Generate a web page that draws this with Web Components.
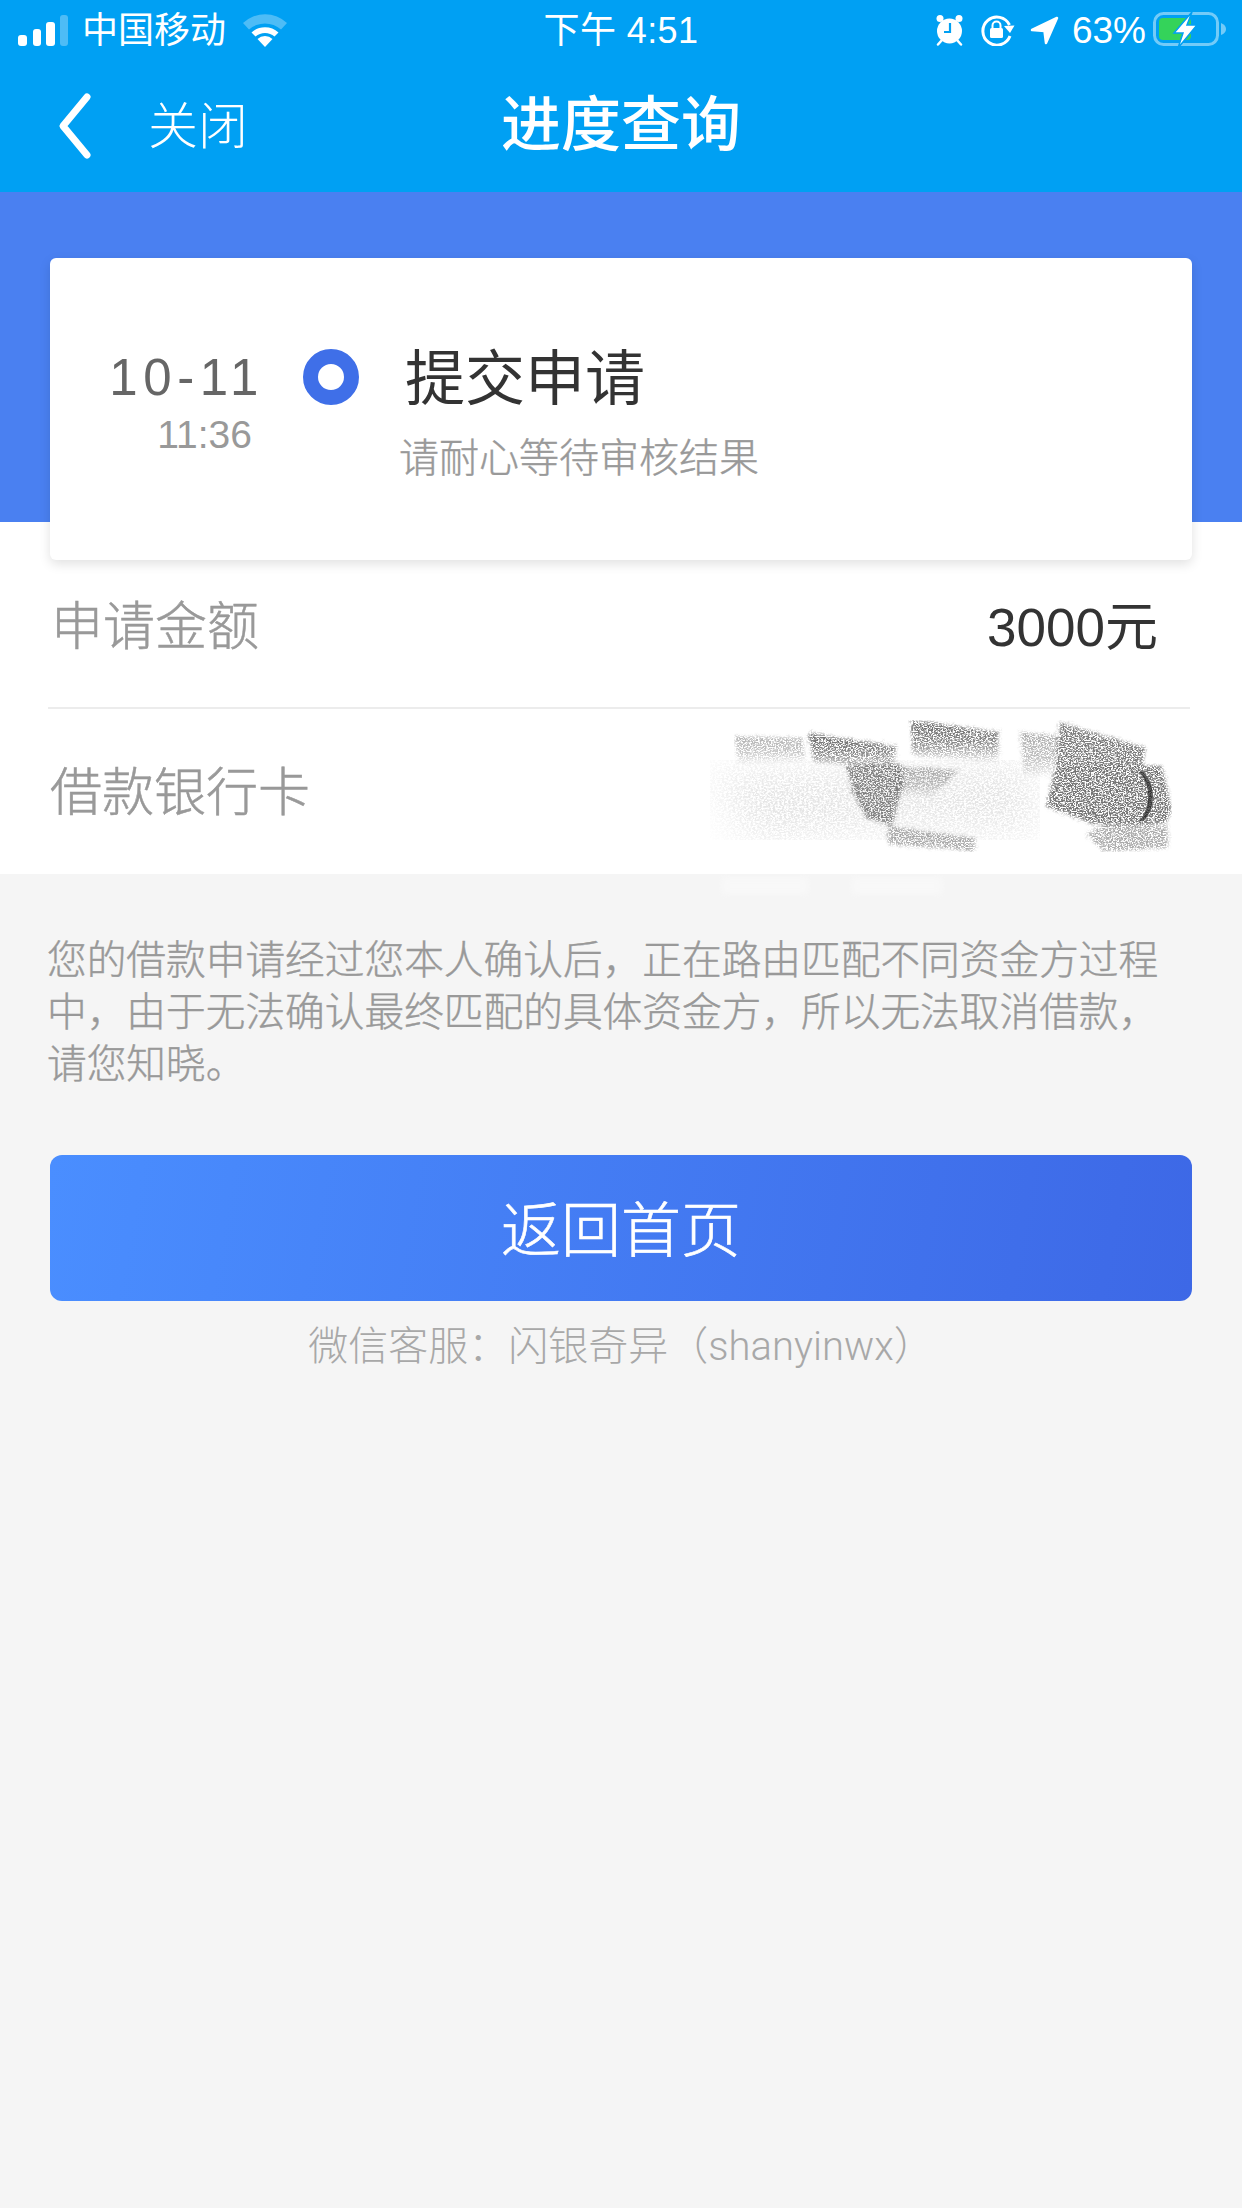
<!DOCTYPE html>
<html lang="zh-CN">
<head>
<meta charset="utf-8">
<title>进度查询</title>
<style>
  html, body { margin: 0; padding: 0; background: #f5f5f5; }
  body {
    width: 1242px;
    height: 2208px;
    overflow: hidden;
    font-family: "Liberation Sans", "Noto Sans CJK SC", sans-serif;
  }
  .thin { font-family: Roboto, "Liberation Sans", sans-serif; font-weight: 300; }
</style>
</head>
<body>
<app-header title="进度查询" back="关闭"></app-header>
<progress-band>
  <progress-card date="10-11" time="11:36" heading="提交申请" note="请耐心等待审核结果"></progress-card>
</progress-band>
<info-list>
  <info-row label="申请金额" value="3000元"></info-row>
  <info-row label="借款银行卡" value=")" masked></info-row>
</info-list>
<notice-text>您的借款申请经过您本人确认后，正在路由匹配不同资金方过程中，由于无法确认最终匹配的具体资金方，所以无法取消借款，请您知晓。</notice-text>
<primary-button>返回首页</primary-button>
<service-line>微信客服：闪银奇异（<span class="thin">shanyinwx</span>）</service-line>

<script>
class AppHeader extends HTMLElement {
  connectedCallback() {
    this.attachShadow({ mode: 'open' });
    this.shadowRoot.innerHTML = `
      <style>
        :host { display: block; height: 192px; background: #00a0f3; color: #fff; }
        .status {
          height: 60px;
          display: grid;
          grid-template-columns: 1fr auto 1fr;
          align-items: center;
          font-size: 36px;
        }
        .left { display: flex; align-items: center; padding-left: 18px; }
        .carrier { margin-left: 13px; margin-right: 16px; line-height: 40px; padding-top: 2px; }
        .clock { font-size: 36px; line-height: 40px; letter-spacing: .4px; padding-top: 2px; }
        .right { display: flex; align-items: center; justify-content: flex-end; padding-right: 15px; }
        .pct { font-size: 37px; line-height: 40px; margin: 0 7px 0 13px; padding-top: 1px; }
        svg { display: block; }
        .bar {
          height: 132px;
          display: grid;
          grid-template-columns: 1fr auto 1fr;
          align-items: center;
        }
        .back { display: flex; align-items: center; padding-left: 57px; }
        .back span { font-size: 50px; font-weight: 300; margin-left: 55px; line-height: 60px; position: relative; top: 1px; }
        h1 { margin: 0; font-size: 60px; font-weight: 500; line-height: 70px; }
      </style>
      <div class="status">
        <div class="left">
          <svg width="51" height="32" viewBox="0 0 51 32" fill="#fff">
            <rect x="0" y="21" width="9" height="11" rx="3"/>
            <rect x="15" y="15" width="8" height="17" rx="3"/>
            <rect x="28" y="8" width="9" height="24" rx="3"/>
            <rect x="42" y="1" width="8" height="31" rx="3" opacity=".3"/>
          </svg>
          <span class="carrier">中国移动</span>
          <svg width="46" height="36" viewBox="0 0 46 36">
            <path d="M23 35 L15.500 27 A11 11 0 0 1 30.500 27 Z" fill="#fff"/>
            <path d="M9.500 20.500 A20 20 0 0 1 36.500 20.500 L32.500 24.500 A14.500 14.500 0 0 0 13.500 24.500 Z" fill="#fff"/>
            <path d="M1 11 A32 32 0 0 1 45 11 L39 17.500 A24 24 0 0 0 7 17.500 Z" fill="#fff" opacity=".3"/>
          </svg>
        </div>
        <div class="clock">下午 4:51</div>
        <div class="right">
          <svg width="29" height="32" viewBox="0 0 29 32" fill="#fff">
            <circle cx="5" cy="4.500" r="3.500"/>
            <circle cx="24" cy="4.500" r="3.500"/>
            <path d="M7 26 L3 30.500" stroke="#fff" stroke-width="2.500" stroke-linecap="round"/>
            <path d="M22 26 L26 30.500" stroke="#fff" stroke-width="2.500" stroke-linecap="round"/>
            <circle cx="14.500" cy="17" r="12.500"/>
            <path d="M15 9 V18 H9" fill="none" stroke="#00a0f3" stroke-width="2.200"/>
          </svg>
          <svg style="margin-left:17px" width="34" height="32" viewBox="0 0 34 32">
            <path d="M28.500 11 A14 14 0 1 0 29 22" fill="none" stroke="#fff" stroke-width="3"/>
            <path d="M23 12 L33.500 11.500 L29 19 Z" fill="#fff"/>
            <rect x="9" y="14" width="13" height="10" rx="1.500" fill="#fff"/>
            <path d="M11.500 14 V11.500 A4 4 0 0 1 19.500 11.500 V14" fill="none" stroke="#fff" stroke-width="2"/>
          </svg>
          <svg style="margin-left:15px" width="29" height="29" viewBox="0 0 29 29">
            <path d="M2 14 L27 2 L16 27 L14.500 15 Z" fill="#fff" stroke="#fff" stroke-width="2.500" stroke-linejoin="round"/>
          </svg>
          <span class="pct">63%</span>
          <svg width="74" height="36" viewBox="0 0 74 36">
            <rect x="1.500" y="1.500" width="63" height="31" rx="9" fill="none" stroke="#fff" stroke-opacity=".45" stroke-width="3"/>
            <path d="M68 11 Q73 13 73 17 Q73 21 68 23 Z" fill="#fff" opacity=".45"/>
            <rect x="6" y="6" width="32" height="22" rx="4" fill="#34d35a"/>
            <path d="M39 0 L21 21 H30 L25 36 L44 13 H34 Z" fill="#fff" stroke="#00a0f3" stroke-width="1.500"/>
          </svg>
        </div>
      </div>
      <div class="bar">
        <div class="back">
          <svg width="36" height="68" viewBox="0 0 36 68">
            <path d="M30 5 L6 34 L30 63" fill="none" stroke="#fff" stroke-width="7" stroke-linecap="round" stroke-linejoin="round"/>
          </svg>
          <span>${this.getAttribute('back')}</span>
        </div>
        <h1>${this.getAttribute('title')}</h1>
        <div></div>
      </div>
    `;
  }
}

class ProgressBand extends HTMLElement {
  connectedCallback() {
    this.attachShadow({ mode: 'open' });
    this.shadowRoot.innerHTML = `
      <style>
        :host { display: block; height: 330px; box-sizing: border-box; padding: 66px 50px 0; background: #4a80f1; }
      </style>
      <slot></slot>
    `;
  }
}

class ProgressCard extends HTMLElement {
  connectedCallback() {
    this.attachShadow({ mode: 'open' });
    this.shadowRoot.innerHTML = `
      <style>
        :host {
          display: grid;
          grid-template-columns: 207px 56px 1fr;
          column-gap: 46px;
          position: relative;
          z-index: 2;
          height: 302px;
          box-sizing: border-box;
          padding-top: 84px;
          background: #fff;
          border-radius: 6px;
          box-shadow: 0 4px 12px rgba(0,0,0,.12);
        }
        .when { text-align: right; margin-right: -7px; margin-top: 8px; }
        .date { font-size: 51px; line-height: 56px; color: #666; letter-spacing: 5.600px; }
        .time { font-size: 39px; line-height: 44px; color: #999; margin-top: 7px; padding-right: 12px; }
        .dot {
          width: 56px; height: 56px;
          box-sizing: border-box;
          margin-top: 7px;
          border: 15px solid #3f6fe8;
          border-radius: 50%;
        }
        .what { margin-left: -6px; margin-top: 3px; }
        h2 { margin: 0 0 0 6px; font-size: 60px; font-weight: 400; line-height: 70px; color: #333; }
        p { margin: 18px 0 0; font-size: 40px; font-weight: 300; -webkit-text-stroke: .4px #999; line-height: 50px; color: #999; }
      </style>
      <div class="when">
        <div class="date">${this.getAttribute('date')}</div>
        <div class="time">${this.getAttribute('time')}</div>
      </div>
      <div class="dot"></div>
      <div class="what">
        <h2>${this.getAttribute('heading')}</h2>
        <p>${this.getAttribute('note')}</p>
      </div>
    `;
  }
}

class InfoList extends HTMLElement {
  connectedCallback() {
    this.attachShadow({ mode: 'open' });
    this.shadowRoot.innerHTML = `
      <style>
        :host { display: block; background: #fff; padding-top: 38px; }
      </style>
      <slot></slot>
    `;
  }
}

class InfoRow extends HTMLElement {
  connectedCallback() {
    const masked = this.hasAttribute('masked');
    this.attachShadow({ mode: 'open' });
    // the bank card number is scratched out in the reference, hence the pencil overlay
    this.shadowRoot.innerHTML = `
      <style>
        :host {
          display: flex;
          justify-content: space-between;
          align-items: center;
          position: relative;
          height: ${masked ? 165 : 149}px;
          margin-left: 48px;
          margin-right: 52px;
          padding-right: ${masked ? 34 : 32}px;
          ${masked ? '' : 'padding-bottom: 22px;'}
          box-sizing: border-box;
          font-size: 52px;
          ${masked ? '' : 'border-bottom: 2px solid #ececec;'}
        }
        .label { color: #999; font-weight: 300; -webkit-text-stroke: .5px #999; ${masked ? 'margin-left:2px; margin-bottom:6px;' : 'margin-left:3px;'} }
        .value { color: #333; ${masked ? 'font-weight:300;' : 'font-size:53px;'} }
        svg { position: absolute; left: -48px; top: -189px; pointer-events: none; }
      </style>
      <span class="label">${this.getAttribute('label')}</span>
      <span class="value">${this.getAttribute('value')}</span>
      ${masked ? `
      <svg width="1242" height="400" viewBox="0 520 1242 400">
        <defs>
          <linearGradient id="fade" x1="0" y1="0" x2="0" y2="1">
            <stop offset="0" stop-opacity="1"/>
            <stop offset=".55" stop-opacity=".75"/>
            <stop offset="1" stop-opacity=".12"/>
          </linearGradient>
          <filter id="pencil" x="0" y="0" width="100%" height="100%" color-interpolation-filters="sRGB">
            <feTurbulence type="fractalNoise" baseFrequency="0.6 0.8" numOctaves="3" seed="11" result="n"/>
            <feDisplacementMap in="SourceGraphic" in2="n" scale="12" xChannelSelector="R" yChannelSelector="G" result="d"/>
            <feGaussianBlur in="d" stdDeviation="1.200" result="shape"/>
            <feColorMatrix in="n" type="matrix" values="0 0 0 0 .4  0 0 0 0 .4  0 0 0 0 .4  5 0 0 0 -1.900" result="grain"/>
            <feComposite in="grain" in2="shape" operator="in"/>
          </filter>
          <filter id="haze" x="0" y="0" width="100%" height="100%" color-interpolation-filters="sRGB">
            <feTurbulence type="fractalNoise" baseFrequency="0.45 0.6" numOctaves="3" seed="4" result="n"/>
            <feGaussianBlur in="SourceGraphic" stdDeviation="22" result="shape"/>
            <feColorMatrix in="n" type="matrix" values="0 0 0 0 .68  0 0 0 0 .68  0 0 0 0 .68  4 0 0 0 -1.500" result="grain"/>
            <feComposite in="grain" in2="shape" operator="in"/>
          </filter>
          <filter id="soft" x="-10%" y="-30%" width="120%" height="160%"><feGaussianBlur stdDeviation="3"/></filter>
        </defs>
        <g filter="url(#haze)">
          <polygon fill-opacity=".36" points="710,772 1030,760 1040,834 880,830 750,840"/>
        </g>
        <g filter="url(#pencil)">
          <polygon fill="url(#fade)" fill-opacity=".5" points="734,736 802,738 806,760 738,764"/>
          <polygon fill="url(#fade)" points="808,733 896,746 894,770 814,762"/>
          <polygon fill-opacity=".8" points="846,764 900,764 904,782 892,826 866,818 852,790"/>
          <polygon fill-opacity=".55" points="888,826 976,838 974,851 888,844"/>
          <polygon fill="url(#fade)" fill-opacity=".55" points="892,766 960,770 930,798 898,792"/>
          <polygon fill="url(#fade)" points="911,720 999,732 998,762 912,756"/>
          <polygon fill="url(#fade)" fill-opacity=".55" points="1020,732 1062,736 1060,778 1024,774"/>
          <polygon fill-opacity=".85" points="1060,722 1146,748 1142,770 1056,768"/>
          <polygon fill-opacity=".9" points="1056,766 1162,766 1172,808 1166,824 1092,824 1046,806"/>
          <polygon fill-opacity=".55" points="1086,834 1110,822 1168,826 1168,848 1104,852"/>
        </g>
        <polygon fill="#fff" opacity=".35" filter="url(#soft)" points="722,878 808,878 808,894 722,894"/>
        <polygon fill="#fff" opacity=".35" filter="url(#soft)" points="852,878 942,878 942,894 852,894"/>
      </svg>` : ''}
    `;
  }
}

class NoticeText extends HTMLElement {
  connectedCallback() {
    this.attachShadow({ mode: 'open' });
    this.shadowRoot.innerHTML = `
      <style>
        :host {
          display: block;
          box-sizing: border-box;
          width: 1242px;
          padding: 60px 60px 0 47px;
          font-size: 39.700px;
          font-weight: 300;
          -webkit-text-stroke: .4px #999;
          line-height: 52px;
          color: #999;
        }
      </style>
      <slot></slot>
    `;
  }
}

class PrimaryButton extends HTMLElement {
  connectedCallback() {
    this.attachShadow({ mode: 'open' });
    this.shadowRoot.innerHTML = `
      <style>
        :host {
          display: flex;
          align-items: center;
          justify-content: center;
          height: 146px;
          box-sizing: border-box;
          padding-bottom: 5px;
          margin: 65px 50px 0;
          border-radius: 12px;
          background: linear-gradient(100deg, #4a8eff 0%, #3d68e6 100%);
          color: #fff;
          font-size: 60px;
          font-weight: 300;
          -webkit-text-stroke: .6px #fff;
        }
      </style>
      <slot></slot>
    `;
  }
}

class ServiceLine extends HTMLElement {
  connectedCallback() {
    this.attachShadow({ mode: 'open' });
    this.shadowRoot.innerHTML = `
      <style>
        :host {
          display: block;
          margin-top: 20px;
          text-align: center;
          font-size: 40px;
          font-weight: 300;
          line-height: 50px;
          color: #a8a8a8;
        }
      </style>
      <slot></slot>
    `;
  }
}

customElements.define('app-header', AppHeader);
customElements.define('progress-band', ProgressBand);
customElements.define('progress-card', ProgressCard);
customElements.define('info-list', InfoList);
customElements.define('info-row', InfoRow);
customElements.define('notice-text', NoticeText);
customElements.define('primary-button', PrimaryButton);
customElements.define('service-line', ServiceLine);
</script>
</body>
</html>
